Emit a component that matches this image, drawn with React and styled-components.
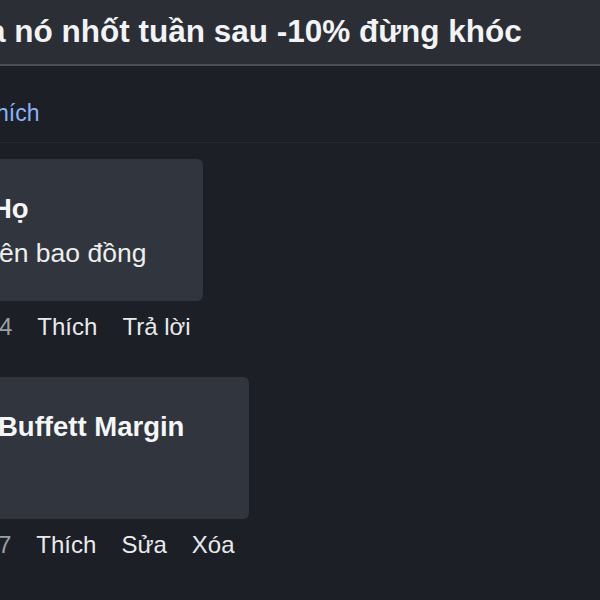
import React from "react";
import styled, { createGlobalStyle } from "styled-components";

const Global = createGlobalStyle`
  html, body { margin: 0; padding: 0; background: #1c1f26; }
  body { width: 600px; height: 600px; overflow: hidden; font-family: "Liberation Sans", Arial, sans-serif; }
`;

const Page = styled.div`
  width: 600px;
  height: 600px;
  overflow: hidden;
  background: #1c1f26;
  display: flex;
  flex-direction: column;
`;

const Header = styled.header`
  height: 64px;
  background: #2b2e35;
  border-bottom: 2px solid #4a4e55;
  display: flex;
  align-items: center;
  overflow: hidden;
`;

const Title = styled.h1`
  margin: -1px 0 0 ${(p) => p.$shift}px;
  font-size: 31.5px;
  font-weight: 700;
  color: #f1f3f5;
  white-space: nowrap;
`;

const LinkBar = styled.div`
  height: 77px;
  box-sizing: border-box;
  padding-top: 34px;
  border-bottom: 1px solid #272a31;
  display: flex;
  align-items: flex-start;
  overflow: hidden;
`;

const Link = styled.span`
  margin-left: ${(p) => p.$shift}px;
  font-size: 23px;
  line-height: 26px;
  color: #8ab4f8;
  white-space: nowrap;
`;

const List = styled.div`
  display: flex;
  flex-direction: column;
  gap: 24px;
  padding-top: 16px;
  overflow: hidden;
`;

const Comment = styled.div`
  display: flex;
  flex-direction: column;
  align-items: flex-start;
`;

const Bubble = styled.div`
  width: ${(p) => p.$w}px;
  height: 142px;
  box-sizing: border-box;
  background: #31353d;
  border-radius: 0 6px 6px 0;
  padding: 34px 0 0 0;
  display: flex;
  flex-direction: column;
  gap: 14px;
  overflow: hidden;
`;

const Name = styled.div`
  margin-left: ${(p) => p.$shift}px;
  font-size: 27.5px;
  line-height: 31px;
  font-weight: 700;
  color: #f5f6f7;
  white-space: nowrap;
`;

const Body = styled.div`
  margin-left: ${(p) => p.$shift}px;
  font-size: 26.5px;
  line-height: 31px;
  color: #eceef0;
  white-space: nowrap;
  min-height: 31px;
`;

const Actions = styled.div`
  display: flex;
  align-items: center;
  gap: 25px;
  height: 52px;
  overflow: hidden;
`;

const Time = styled.span`
  margin-left: ${(p) => p.$shift}px;
  font-size: 24px;
  color: #9aa0a6;
`;

const Action = styled.span`
  font-size: 24px;
  color: #e8eaed;
  white-space: nowrap;
`;

export default function App() {
  return (
    <Page>
      <Global />
      <Header>
        <Title $shift={-12}>a nó nhốt tuần sau -10% đừng khóc</Title>
      </Header>
      <LinkBar>
        <Link $shift={-4}>hích</Link>
      </LinkBar>
      <List>
        <Comment>
          <Bubble $w={203}>
            <Name $shift={-8}>Họ</Name>
            <Body $shift={-1}>ên bao đồng</Body>
          </Bubble>
          <Actions>
            <Time $shift={-1}>4</Time>
            <Action>Thích</Action>
            <Action>Trả lời</Action>
          </Actions>
        </Comment>
        <Comment>
          <Bubble $w={249}>
            <Name $shift={-2}>Buffett Margin</Name>
            <Body $shift={0}></Body>
          </Bubble>
          <Actions>
            <Time $shift={-2}>7</Time>
            <Action>Thích</Action>
            <Action>Sửa</Action>
            <Action>Xóa</Action>
          </Actions>
        </Comment>
      </List>
    </Page>
  );
}
